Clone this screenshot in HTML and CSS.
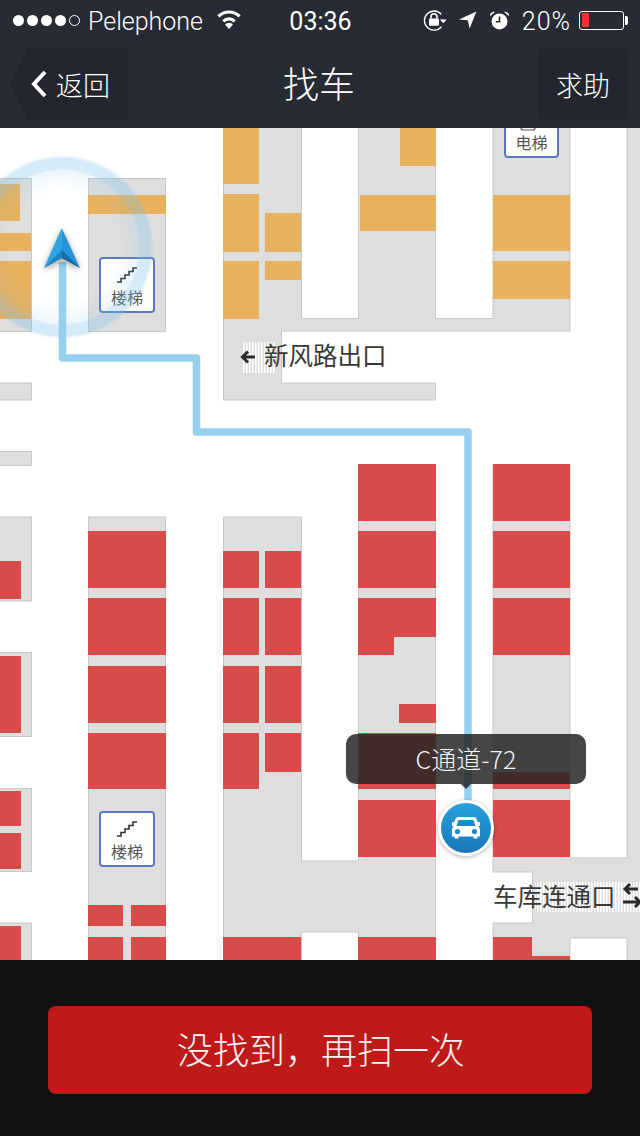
FILE: index.html
```html
<!DOCTYPE html>
<html lang="zh-CN">
<head>
  <meta charset="UTF-8" />
  <meta name="viewport" content="width=device-width, initial-scale=1.0"/>
  <title>找车</title>
  <link rel="stylesheet" href="styles.css">
</head>
<body>
  <div class="top-bar">
    <!-- Status bar -->
    <div class="status-bar">
      <div class="status-left">
        <div class="signal">
          <span class="dot"></span><span class="dot"></span><span class="dot"></span><span class="dot"></span><span class="dot empty"></span>
        </div>
        <span class="carrier">Pelephone</span>
        <svg class="icon-wifi" viewBox="0 0 26 20">
          <path class="wifi-arc" d="M2.4 6.4a15 15 0 0 1 21.2 0"/>
          <path class="wifi-arc" d="M7.3 11.3a8 8 0 0 1 11.4 0"/>
          <path class="icon-fill" d="M13 19l-4-4.6a5.6 5.6 0 0 1 8 0z"/>
        </svg>
      </div>
      <div class="time">03:36</div>
      <div class="status-right">
        <svg class="icon-lock" viewBox="0 0 24 24">
          <path class="thin-line" d="M18.2 6.2a9.6 9.6 0 1 0 .3 12.4"/>
          <path class="icon-fill" d="M16.8 11.6h7l-3.5 3.6z"/>
          <rect class="icon-fill" x="6" y="10.4" width="10" height="7.4" rx="1"/>
          <path class="shackle" d="M8 10.6V8.8a3 3 0 0 1 6 0v1.8"/>
        </svg>
        <svg class="icon-location" viewBox="0 0 18 18">
          <path class="icon-fill" d="M0 8.6L17.4 0.6 10.6 17.6 8.8 9.2z"/>
        </svg>
        <svg class="icon-alarm" viewBox="0 0 21 20">
          <circle class="icon-fill" cx="10.5" cy="11.4" r="8"/>
          <path class="icon-fill" d="M1 6.2a4 4 0 0 1 5-4.4zM20 6.2a4 4 0 0 0-5-4.4z"/>
          <path class="alarm-hands" d="M10.5 6.4v5.4H6.8"/>
        </svg>
        <span class="percent">20%</span>
        <div class="battery"><div class="battery-level"></div></div>
      </div>
    </div>

    <!-- Nav bar -->
    <div class="nav-bar">
      <a class="nav-btn back-btn" href="#">
        <svg class="chevron" viewBox="0 0 16 28"><path d="M14 2L3 14l11 12"/></svg>
        <span>返回</span>
      </a>
      <div class="nav-title">找车</div>
      <a class="nav-btn help-btn" href="#">求助</a>
    </div>
  </div>

  <!-- Map -->
  <div class="map">
    <svg class="map-canvas" viewBox="0 128 640 832">
      <defs>
        <pattern id="hatch" width="3" height="3" patternUnits="userSpaceOnUse">
          <rect width="1.5" height="3" fill="#fff"/>
        </pattern>
        <radialGradient id="ringGlow" cx="0.5" cy="0.5" r="0.5">
          <stop offset="0.6" stop-color="#7cc0ea" stop-opacity="0"/>
          <stop offset="0.83" stop-color="#7cc0ea" stop-opacity="0.14"/>
          <stop offset="0.85" stop-color="#7cc0ea" stop-opacity="0.3"/>
          <stop offset="0.96" stop-color="#7cc0ea" stop-opacity="0.34"/>
          <stop offset="1" stop-color="#7cc0ea" stop-opacity="0"/>
        </radialGradient>
        <linearGradient id="pinBlue" x1="0" y1="0" x2="0" y2="1">
          <stop offset="0" stop-color="#28a2de"/>
          <stop offset="1" stop-color="#1976b5"/>
        </linearGradient>
      </defs>

      <!-- floors -->
      <rect class="floor" x="-10" y="178.5" width="41.5" height="153"/>
      <rect class="floor" x="88.5" y="178.5" width="77" height="153"/>
      <rect class="floor" x="-10" y="383" width="41.5" height="17"/>
      <rect class="floor" x="-10" y="451.5" width="41.5" height="14"/>
      <path class="floor" d="M223.5 120H301.5V318.5H358.5V120H435.5V318.5H493V120H570V331H281.5V383H435.5V400H223.5Z"/>
      <rect class="floor" x="-10" y="517" width="41.5" height="84"/>
      <rect class="floor" x="-10" y="652.5" width="41.5" height="84"/>
      <rect class="floor" x="-10" y="788.5" width="41.5" height="83"/>
      <rect class="floor" x="-10" y="923" width="41.5" height="50"/>
      <rect class="floor" x="88.5" y="517" width="77" height="453"/>
      <path class="floor" d="M223.5 517H301.5V861H358.5V464.5H435.5V970H358.5V932H301.5V970H223.5Z"/>
      <path class="floor" d="M493 464.5H570V858H627V120H650V970H627V938H570V970H493V923H532.5V872H493Z"/>

      <!-- occupied, upper part -->
      <g class="free">
        <rect x="0" y="184" width="20" height="37"/>
        <rect x="0" y="233" width="31" height="18"/>
        <rect x="0" y="261" width="31" height="58"/>
        <rect x="88" y="195" width="78" height="19"/>
        <rect x="223" y="128" width="36" height="56"/>
        <rect x="223" y="194" width="36" height="58"/>
        <rect x="223" y="261" width="36" height="58"/>
        <rect x="265" y="213" width="36" height="39"/>
        <rect x="265" y="261" width="36" height="19"/>
        <rect x="400" y="128" width="36" height="38"/>
        <rect x="360" y="195" width="76" height="36"/>
        <rect x="493" y="195" width="77" height="56"/>
        <rect x="493" y="261" width="77" height="38"/>
      </g>

      <!-- occupied, lower part -->
      <g class="taken">
        <rect x="0" y="561" width="21" height="38"/>
        <rect x="0" y="656" width="21" height="77"/>
        <rect x="0" y="791" width="21" height="35"/>
        <rect x="0" y="833" width="21" height="36"/>
        <rect x="0" y="926" width="21" height="34"/>

        <rect x="88" y="531" width="78" height="57"/>
        <rect x="88" y="598" width="78" height="57"/>
        <rect x="88" y="666" width="78" height="57"/>
        <rect x="88" y="733" width="78" height="56"/>
        <rect x="88" y="905" width="35" height="21"/>
        <rect x="131" y="905" width="35" height="21"/>
        <rect x="88" y="937" width="35" height="23"/>
        <rect x="131" y="937" width="35" height="23"/>

        <rect x="223" y="551" width="36" height="37"/>
        <rect x="265" y="551" width="36" height="37"/>
        <rect x="223" y="598" width="36" height="57"/>
        <rect x="265" y="598" width="36" height="57"/>
        <rect x="223" y="666" width="36" height="57"/>
        <rect x="265" y="666" width="36" height="57"/>
        <rect x="223" y="733" width="36" height="56"/>
        <rect x="265" y="733" width="36" height="39"/>
        <rect x="223" y="937" width="78" height="23"/>

        <rect x="358" y="464" width="78" height="57"/>
        <rect x="358" y="531" width="78" height="57"/>
        <path d="M358 598H436V637H394V655H358Z"/>
        <rect x="399" y="704" width="37" height="19"/>
        <rect x="358" y="733" width="78" height="56"/>
        <rect x="358" y="800" width="78" height="57"/>
        <rect x="358" y="937" width="78" height="23"/>

        <rect x="493" y="464" width="77" height="57"/>
        <rect x="493" y="531" width="77" height="57"/>
        <rect x="493" y="598" width="77" height="57"/>
        <rect x="493" y="772" width="77" height="17"/>
        <rect x="493" y="800" width="77" height="57"/>
        <rect x="493" y="937" width="39" height="23"/>
        <rect x="532" y="956" width="38" height="4"/>
      </g>

      <!-- stairs and lift -->
      <g class="sign">
        <rect class="sign-box" x="100" y="258" width="54" height="54" rx="3"/>
        <path class="stairs" d="M117 282h4v-3.500h4v-3.500h4v-3.500h4v-3.500h4"/>
        <text class="sign-text" x="127" y="304">楼梯</text>
      </g>
      <g class="sign">
        <rect class="sign-box" x="100" y="812" width="54" height="54" rx="3"/>
        <path class="stairs" d="M117 836h4v-3.500h4v-3.500h4v-3.500h4v-3.500h4"/>
        <text class="sign-text" x="127" y="858">楼梯</text>
      </g>
      <g class="sign">
        <rect class="sign-box" x="505" y="103" width="53" height="54" rx="3"/>
        <rect class="lift" x="521" y="112" width="14" height="18" rx="2"/>
        <text class="sign-text" x="531.500" y="149">电梯</text>
      </g>

      <!-- exits -->
      <rect class="hatch" x="242" y="342" width="33" height="31"/>
      <path class="exit-arrow" d="M255 357H243M248 351.500l-5.500 5.500 5.500 5.500"/>
      <text class="exit-text" x="264" y="365">新风路出口</text>

      <rect class="hatch" x="535" y="882" width="105" height="30"/>
      <text class="exit-text" x="493" y="906">车库连通口</text>
      <path class="exit-arrow" d="M638 889H625M630 884l-5 5 5 5M623 902H640M635 897l5 5-5 5"/>

      <!-- route -->
      <circle class="ring" cx="62" cy="247" r="92"/>
      <path class="route" d="M62.500 262V358H196.500V432H468V806"/>

      <!-- current position -->
      <g class="nav-arrow">
        <path class="arrow-top" d="M61.700 228L44 268 61.700 258z"/>
        <path class="arrow-top-right" d="M61.700 228L80 268 61.700 258z"/>
        <path class="arrow-low-left" d="M44 268L61.700 258V250z"/>
        <path class="arrow-low-right" d="M80 268L61.700 258V250z"/>
      </g>

      <!-- car -->
      <g class="car-pin">
        <circle class="pin-circle" cx="466" cy="828" r="26.500"/>
        <path class="car-body" d="M458 817H474C475.500 817 476 818 476.500 819L478 822.500 480 822V826H478.500L480 829V836.500H477.500V838.500H473.500V836.500H458.500V838.500H454.500V836.500H452V829L453.500 826H452V822L454 822.500 455.500 819C456 818 456.500 817 458 817Z"/>
        <path class="car-detail" d="M458.500 820H473.500L475.500 826H456.500Z"/>
        <circle class="car-detail" cx="457.500" cy="831.500" r="2.600"/>
        <circle class="car-detail" cx="474.500" cy="831.500" r="2.600"/>
      </g>
    </svg>

    <div class="bubble">C通道-72</div>
  </div>

  <!-- Footer -->
  <div class="footer">
    <button class="scan-btn">没找到，再扫一次</button>
  </div>
</body>
</html>
```

FILE: styles.css
```css
* {
  box-sizing: border-box;
}

body {
  margin: 0;
  width: 640px;
  height: 1136px;
  overflow: hidden;
  background: #111;
  font-family: "Noto Sans CJK SC", "Noto Sans", sans-serif;
  color: white;
}

.top-bar {
  background: #272b34;
  height: 128px;
}

/* status bar */

.status-bar {
  height: 40px;
  display: grid;
  grid-template-columns: 1fr auto 1fr;
  align-items: center;
  padding: 0 12px 0 13px;
  font-family: Roboto, "Liberation Sans", sans-serif;
  font-weight: 300;
  font-size: 25px;
}

.status-left,
.status-right {
  display: flex;
  align-items: center;
}

.status-right {
  justify-content: flex-end;
  gap: 12px;
}

.signal {
  display: flex;
  gap: 3px;
  margin-right: 8px;
}

.dot {
  width: 11px;
  height: 11px;
  border-radius: 50%;
  background: white;
}

.dot.empty {
  background: none;
  border: 1px solid white;
}

.carrier,
.time,
.percent {
  padding-top: 2px;
}

.icon-wifi {
  width: 26px;
  height: 20px;
  margin-left: 13px;
}

.wifi-arc {
  fill: none;
  stroke: white;
  stroke-width: 3.2;
}

.icon-fill {
  fill: white;
}

.thin-line {
  fill: none;
  stroke: white;
  stroke-width: 1.3;
}

.shackle {
  fill: none;
  stroke: white;
  stroke-width: 1.6;
}

.alarm-hands {
  fill: none;
  stroke: #272b34;
  stroke-width: 1.6;
}

.icon-lock {
  width: 24px;
  height: 24px;
}

.icon-location {
  width: 18px;
  height: 18px;
}

.icon-alarm {
  width: 21px;
  height: 20px;
}

.time {
  font-weight: 400;
}

.percent {
  margin-right: -4px;
  letter-spacing: 1px;
}

.battery {
  position: relative;
  width: 45px;
  height: 19px;
  border: 1px solid white;
  border-radius: 3px;
  padding: 1.500px;
  margin-right: 4px;
}

.battery::after {
  content: "";
  position: absolute;
  top: 4px;
  right: -5px;
  width: 3px;
  height: 9px;
  background: white;
  border-radius: 0 2px 2px 0;
}

.battery-level {
  width: 7px;
  height: 100%;
  background: #f0332c;
}

/* nav bar */

.nav-bar {
  height: 88px;
  display: grid;
  grid-template-columns: 1fr auto 1fr;
  align-items: center;
  padding: 0 12px 0 10px;
}

.nav-btn {
  height: 72px;
  display: flex;
  align-items: center;
  background: #23262e;
  color: white;
  text-decoration: none;
  font-size: 27px;
  font-weight: 300;
}

.back-btn {
  width: 118px;
  padding-left: 21px;
  gap: 9px;
  clip-path: polygon(18px 0, 100% 0, 100% 100%, 18px 100%, 0 50%);
  justify-self: start;
}

.help-btn {
  width: 90px;
  justify-content: center;
  justify-self: end;
  border-radius: 4px;
}

.chevron {
  width: 16px;
  height: 28px;
  fill: none;
  stroke: white;
  stroke-width: 4;
}

.nav-title {
  font-size: 36px;
  font-weight: 300;
  padding-bottom: 4px;
}

/* map */

.map {
  position: relative;
  height: 832px;
  background: white;
  overflow: hidden;
}

.map-canvas {
  display: block;
  width: 640px;
  height: 832px;
}

.floor {
  fill: #dedede;
  stroke: #c8c8c8;
  stroke-width: 1;
}

.free {
  fill: #e8b15d;
}

.taken {
  fill: #d94a4a;
}

.sign-box {
  fill: white;
  stroke: #5c78bd;
  stroke-width: 2;
}

.stairs {
  fill: none;
  stroke: #333;
  stroke-width: 1.6;
}

.lift {
  fill: white;
  stroke: #555;
  stroke-width: 1.2;
}

.sign-text {
  font-size: 16px;
  fill: #555;
  text-anchor: middle;
}

.hatch {
  fill: url(#hatch);
}

.exit-arrow {
  fill: none;
  stroke: #2b2b2b;
  stroke-width: 3;
}

.exit-text {
  font-size: 24.500px;
  fill: #383838;
}

.ring {
  fill: url(#ringGlow);
}

.route {
  fill: none;
  stroke: #97cfee;
  stroke-width: 7.500;
  stroke-linejoin: round;
}

.nav-arrow {
  filter: drop-shadow(0 2px 3px rgba(0, 0, 0, 0.4));
}

.arrow-top {
  fill: #2ea5e4;
}

.arrow-top-right {
  fill: #2593d6;
}

.arrow-low-left {
  fill: #1f86c6;
}

.arrow-low-right {
  fill: #1a6ca8;
}

.car-pin {
  filter: drop-shadow(0 1px 2px rgba(0, 0, 0, 0.3));
}

.pin-circle {
  fill: url(#pinBlue);
  stroke: white;
  stroke-width: 3;
}

.car-body {
  fill: white;
}

.car-detail {
  fill: #2088c6;
}

.bubble {
  position: absolute;
  left: 346px;
  top: 606px;
  width: 240px;
  height: 50px;
  border-radius: 10px;
  background: rgba(38, 38, 38, 0.85);
  color: #f4f4f4;
  font-size: 25px;
  font-weight: 300;
  line-height: 48px;
  text-align: center;
}

.bubble::after {
  content: "";
  position: absolute;
  left: 115px;
  bottom: -5px;
  border-left: 5px solid transparent;
  border-right: 5px solid transparent;
  border-top: 5px solid rgba(38, 38, 38, 0.85);
}

/* footer */

.footer {
  height: 176px;
  padding: 46px 48px 42px;
}

.scan-btn {
  display: block;
  width: 100%;
  height: 88px;
  padding: 0 0 4px 2px;
  border: none;
  border-radius: 8px;
  background: #bf1a1a;
  color: #fdf2f2;
  font-family: inherit;
  font-size: 36px;
  font-weight: 300;
}
```
